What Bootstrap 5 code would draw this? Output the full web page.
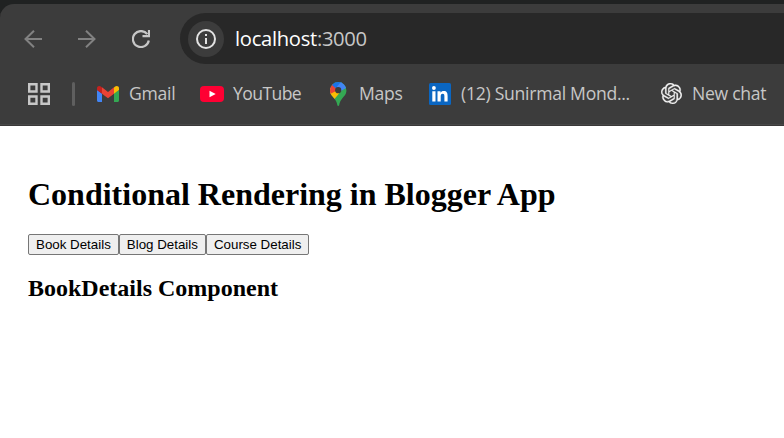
<!DOCTYPE html>
<html lang="en">
<head>
<meta charset="utf-8">
<title>Blogger App</title>
<link href="https://cdn.jsdelivr.net/npm/bootstrap@5.3.0/dist/css/bootstrap.min.css" rel="stylesheet">
<style>
body{background:#fff;overflow:hidden}
.browser-top{background:#202222;height:126px;padding-top:4px;font-family:"Open Sans","Noto Sans",sans-serif}
.browser-panel{background:#3c3c3c;height:122px;border-top-left-radius:14px;box-shadow:inset 0 -1px #3a3838,inset 0 -2px #474747}
.toolbar{height:69px;padding-left:24px}
.nav-icon{width:18px;height:18px;margin-right:36px}
.address{height:51px;background:#282828;border-radius:26px 0 0 26px;padding-left:8px;margin-left:-6px}
.info-chip{width:36px;height:36px;background:#3c3c3c}
.url{font-size:20.2px;letter-spacing:-.3px;color:#c7c7c7;margin-left:11px;line-height:28px;padding-bottom:2px}
.url span{color:#fff}
.bookmarks{height:41px;padding-left:28px;font-size:17.6px;color:#c7c7c7;line-height:24px;white-space:nowrap}
.bookmarks span{padding-bottom:2px}
.bar-split{width:3px;height:24px;background:#5f5f5f;border-radius:2px;margin:0 22px}
.bm-gmail{width:103px}.bm-youtube{width:130px}.bm-maps{width:99px}.bm-linkedin{width:232px}
.bm-gmail,.bm-maps,.bm-linkedin,.bm-chat{letter-spacing:-.28px}
.bm-youtube{letter-spacing:-.6px}
.page{padding:50px 28px 0;font-family:"Liberation Serif","Times New Roman",serif;color:#000}
.page h1{font-size:32px;line-height:37px;font-weight:700;margin-bottom:21px}
.page h2{font-size:24px;line-height:27px;font-weight:700;margin-top:20px}
.tab-button{font:13.333px/15px "Liberation Sans",Arial,sans-serif;height:21px;padding:1px 7px;border:1px solid #767676;border-radius:2px;background:#efefef;color:#000;white-space:nowrap}
</style>
<script src="https://cdn.jsdelivr.net/npm/bootstrap@5.3.0/dist/js/bootstrap.bundle.min.js"></script>
</head>
<body>
<header class="browser-top">
<div class="browser-panel">
<div class="toolbar d-flex align-items-center">
<svg class="nav-icon flex-shrink-0" viewBox="0 0 18 18" fill="none" stroke="#828282" stroke-width="2"><path d="M18 9H1.500M10 .8 1.500 9l8.500 8.200"/></svg>
<svg class="nav-icon flex-shrink-0" viewBox="0 0 18 18" fill="none" stroke="#828282" stroke-width="2"><path d="M0 9h16.500M8 .8 16.500 9 8 17.200"/></svg>
<svg class="nav-icon flex-shrink-0" viewBox="0 0 18 18" fill="none" stroke="#c7c7c7" stroke-width="2.200"><path d="M16.800 10.500A8 8 0 1 1 15.300 4.200M17 0v6.200h-6.500"/></svg>
<div class="address d-flex align-items-center flex-grow-1">
<div class="info-chip rounded-circle d-flex align-items-center justify-content-center">
<svg width="20" height="20" viewBox="0 0 20 20"><circle cx="10" cy="10" r="9" fill="none" stroke="#e3e3e3" stroke-width="2"/><path d="M9 9h2v6H9zM9 5h2v2H9z" fill="#e3e3e3"/></svg>
</div>
<div class="url"><span>localhost</span>:3000</div>
</div>
</div>
<nav class="bookmarks d-flex align-items-center">
<svg class="flex-shrink-0" width="22" height="22" viewBox="0 0 22 22" fill="none" stroke="#c7c7c7" stroke-width="2.400"><path d="M1.200 1.200h7.300v7.300H1.200zM13.500 1.200h7.300v7.300h-7.300zM1.200 13.500h7.300v7.300H1.200zM13.500 13.500h7.300v7.300h-7.300z"/></svg>
<div class="bar-split flex-shrink-0"></div>
<div class="bm-gmail d-flex align-items-center flex-shrink-0">
<svg class="me-2" width="24" height="24" viewBox="0 0 24 24"><path fill="#4285f4" d="M0 8v10.500C0 19.400.700 20 1.500 20H5V11.500z"/><path fill="#34a853" d="M17 11.500V20h3.500c.8 0 1.500-.6 1.500-1.500V8z"/><path fill="#fbbc04" d="M17 5.500v6.200l5-3.700V6.300c0-2.100-2.300-3-3.900-1.800z"/><path fill="#ea4335" d="M5 11.700V5.300l6 4.600 6-4.600v6.400l-6 4.500z"/><path fill="#c5221f" d="M0 6.300V8l5 3.700V5.500l-1.100-.9C2.300 3.400 0 4.300 0 6.300z"/></svg><span>Gmail</span></div>
<div class="bm-youtube d-flex align-items-center flex-shrink-0">
<svg width="24" height="24" viewBox="0 0 24 24" style="margin-right:9px"><rect y="4" width="24" height="16" rx="4" fill="#ff0033"/><path d="m9.500 8.700 6.200 3.300-6.200 3.300z" fill="#fff"/></svg><span>YouTube</span></div>
<div class="bm-maps d-flex align-items-center flex-shrink-0">
<svg width="17" height="24" viewBox="0 0 17 24" style="margin-right:12px"><defs><clipPath id="pin"><path d="M8.200 0A8.200 8.200 0 0 0 0 8.200c0 4 2 5.500 4.300 8.200 2 2.400 2.500 4 3 6.500.2 1.400 1.600 1.400 1.900 0 .5-2.500 1-4.100 3-6.500 2.300-2.700 4.200-4.200 4.200-8.200A8.200 8.200 0 0 0 8.200 0z"/></clipPath></defs><g clip-path="url(#pin)"><path fill="#34a853" d="M0 0h17v24H0z"/><path fill="#fbbc04" d="M0 6v11h4.500l7-8.500-3.300-3z"/><path fill="#ea4335" d="M0 0v12l8.200-4L3 2z"/><path fill="#1a73e8" d="M1.900 3 8.200 8.200 12 3.500V0H3z"/><path fill="#4285f4" d="m10.900 0-4 4.800 3.500 4.500L17 5.500V0z"/></g><circle cx="8.200" cy="8.200" r="3.100" fill="#3c3c3c"/></svg><span>Maps</span></div>
<div class="bm-linkedin d-flex align-items-center flex-shrink-0">
<svg width="22" height="22" viewBox="0 0 22 22" style="margin-right:10px"><rect width="22" height="22" rx="1.500" fill="#0a66c2"/><path fill="#fff" d="M3.300 8.300h3.200v10.200H3.300zM8.500 8.300h3v1.400c.6-1 1.700-1.700 3.200-1.700 3.200 0 3.900 2.100 3.900 4.900v5.600h-3.200v-5c0-1.300-.1-2.700-1.700-2.700s-2 1.300-2 2.700v5H8.500z"/><circle cx="4.900" cy="5" r="1.900" fill="#fff"/></svg><span>(12) Sunirmal Mond...</span></div>
<div class="bm-chat d-flex align-items-center flex-shrink-0">
<svg width="21" height="21" viewBox="0 0 24 24" style="margin-right:10px"><path fill="#f1f1f1" stroke="#f1f1f1" stroke-width=".3" d="M22.2819 9.8211a5.9847 5.9847 0 0 0-.5157-4.9108 6.0462 6.0462 0 0 0-6.5098-2.9A6.0651 6.0651 0 0 0 4.9807 4.1818a5.9847 5.9847 0 0 0-3.9977 2.9 6.0462 6.0462 0 0 0 .7427 7.0966 5.98 5.98 0 0 0 .511 4.9107 6.051 6.051 0 0 0 6.5146 2.9001A5.9847 5.9847 0 0 0 13.2599 24a6.0557 6.0557 0 0 0 5.7718-4.2058 5.9894 5.9894 0 0 0 3.9977-2.9001 6.0557 6.0557 0 0 0-.7475-7.0729zm-9.022 12.6081a4.4755 4.4755 0 0 1-2.8764-1.0408l.1419-.0804 4.7783-2.7582a.7948.7948 0 0 0 .3927-.6813v-6.7369l2.02 1.1686a.071.071 0 0 1 .038.052v5.5826a4.504 4.504 0 0 1-4.4945 4.4944zm-9.6607-4.1254a4.4708 4.4708 0 0 1-.5346-3.0137l.142.0852 4.783 2.7582a.7712.7712 0 0 0 .7806 0l5.8428-3.3685v2.3324a.0804.0804 0 0 1-.0332.0615L9.74 19.9502a4.4992 4.4992 0 0 1-6.1408-1.6464zM2.3408 7.8956a4.485 4.485 0 0 1 2.3655-1.9728V11.6a.7664.7664 0 0 0 .3879.6765l5.8144 3.3543-2.0201 1.1685a.0757.0757 0 0 1-.071 0l-4.8303-2.7865A4.504 4.504 0 0 1 2.3408 7.872zm16.5963 3.8558L13.1038 8.364 15.1192 7.2a.0757.0757 0 0 1 .071 0l4.8303 2.7913a4.4944 4.4944 0 0 1-.6765 8.1042v-5.6772a.79.79 0 0 0-.407-.667zm2.0107-3.0231l-.142-.0852-4.7735-2.7818a.7759.7759 0 0 0-.7854 0L9.409 9.2297V6.8974a.0662.0662 0 0 1 .0284-.0615l4.8303-2.7866a4.4992 4.4992 0 0 1 6.6802 4.66zM8.3065 12.863l-2.02-1.1638a.0804.0804 0 0 1-.038-.0567V6.0742a4.4992 4.4992 0 0 1 7.3757-3.4537l-.142.0805L8.704 5.459a.7948.7948 0 0 0-.3927.6813zm1.0976-2.3654l2.602-1.4998 2.6069 1.4998v2.9994l-2.5974 1.4997-2.6067-1.4997Z"/></svg><span>New chat</span></div>
</nav>
</div>
</header>
<main class="page">
<h1>Conditional Rendering in Blogger App</h1>
<div class="d-flex"><button class="tab-button">Book Details</button><button class="tab-button">Blog Details</button><button class="tab-button">Course Details</button></div>
<h2>BookDetails Component</h2>
</main>
</body>
</html>
